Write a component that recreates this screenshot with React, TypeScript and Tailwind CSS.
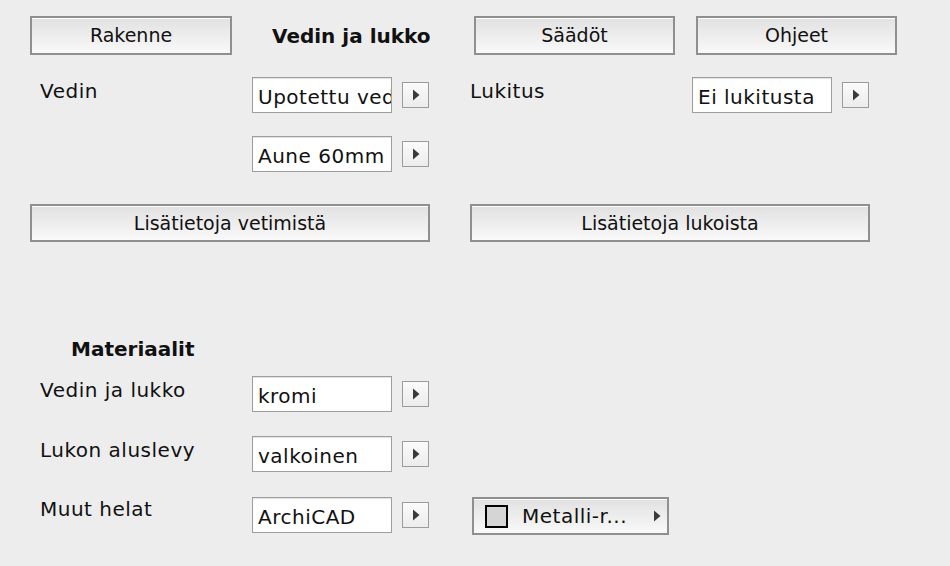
import React from 'react';

const sans = "font-['DejaVu_Sans',Verdana,sans-serif]";

function Tri() {
  return (
    <svg width="8" height="12" viewBox="0 0 8 12">
      <path d="M1 0.5 L7.5 6 L1 11.5 Z" fill="#3a3a3a" />
    </svg>
  );
}

function Btn({ label, className = '' }: { label: string; className?: string }) {
  return (
    <button
      className={`flex items-center justify-center border-2 border-[#8f8f8f] bg-linear-to-b from-[#e1e1e1] to-[#f9f9f9] shadow-[inset_0_1px_0_#fff] text-[19px] tracking-normal text-[#111] ${className}`}
    >
      {label}
    </button>
  );
}

function Arrow() {
  return (
    <div className="w-[27px] h-[26px] border border-[#9c9c9c] bg-linear-to-b from-[#fbfbfb] to-[#ececec] flex items-center justify-center shrink-0">
      <Tri />
    </div>
  );
}

function Field({ value }: { value: string }) {
  return (
    <div className="w-[140px] h-[36px] border border-[#9e9e9e] bg-white shadow-[inset_0_1px_1px_rgba(0,0,0,0.12)] overflow-hidden whitespace-nowrap pl-[5px] pt-[7px] leading-[24px] shrink-0">
      {value}
    </div>
  );
}

function Picker({ value }: { value: string }) {
  return (
    <div className="flex items-center gap-[10px]">
      <Field value={value} />
      <Arrow />
    </div>
  );
}

function MatRow({ label, value, extra }: { label: string; value: string; extra?: React.ReactNode }) {
  return (
    <div className="flex items-center pl-[40px]">
      <div className="w-[212px] self-start pt-[2px] leading-[24px]">{label}</div>
      <Picker value={value} />
      {extra}
    </div>
  );
}

export default function App() {
  return (
    <div className={`w-[950px] h-[566px] bg-[#ededed] pt-[16px] text-[20px] tracking-[0.5px] text-[#111] ${sans}`}>
      <div className="flex items-center h-[39px] pl-[30px]">
        <Btn label="Rakenne" className="w-[202px] h-[39px]" />
        <div className="w-[242px] pl-[40px] font-bold tracking-normal leading-[24px] whitespace-nowrap">Vedin ja lukko</div>
        <Btn label="Säädöt" className="w-[201px] h-[39px]" />
        <Btn label="Ohjeet" className="ml-[21px] w-[201px] h-[39px]" />
      </div>

      <div className="mt-[22px] flex items-center pl-[40px]">
        <div className="w-[212px] self-start pt-[2px] leading-[24px]">Vedin</div>
        <Picker value="Upotettu vedin" />
        <div className="ml-[41px] w-[222px] self-start pt-[2px] leading-[24px]">Lukitus</div>
        <Picker value="Ei lukitusta" />
      </div>

      <div className="mt-[23px] pl-[252px]">
        <Picker value="Aune 60mm" />
      </div>

      <div className="mt-[32px] flex gap-[40px] pl-[30px]">
        <Btn label="Lisätietoja vetimistä" className="w-[400px] h-[38px]" />
        <Btn label="Lisätietoja lukoista" className="w-[400px] h-[38px]" />
      </div>

      <div className="mt-[95px] pl-[71px] font-bold tracking-normal leading-[24px]">Materiaalit</div>

      <div className="mt-[15px]">
        <MatRow label="Vedin ja lukko" value="kromi" />
      </div>
      <div className="mt-[24px]">
        <MatRow label="Lukon aluslevy" value="valkoinen" />
      </div>
      <div className="mt-[23px]">
        <MatRow
          label="Muut helat"
          value="ArchiCAD"
          extra={
            <button className="ml-[43px] w-[197px] h-[38px] border-2 border-[#8f8f8f] bg-linear-to-b from-[#e1e1e1] to-[#f9f9f9] shadow-[inset_0_1px_0_#fff] flex items-center pl-[11px] pr-[6px] mt-[2px]">
              <span className="w-[23px] h-[23px] border-2 border-black bg-[#d5d5d5] shrink-0" />
              <span className="ml-[14px] flex-1 text-left whitespace-nowrap leading-[24px]">Metalli-r...</span>
              <Tri />
            </button>
          }
        />
      </div>
    </div>
  );
}
